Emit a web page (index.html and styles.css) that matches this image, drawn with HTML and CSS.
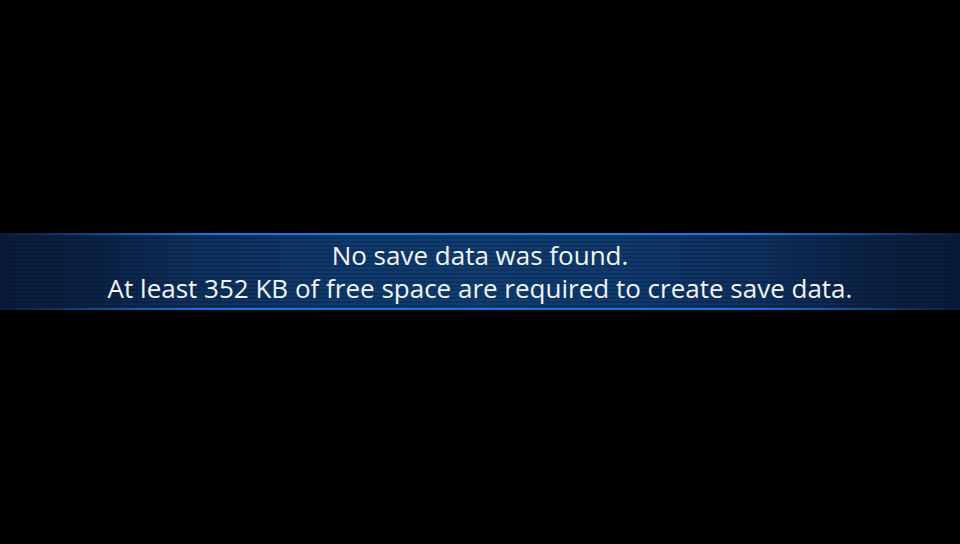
FILE: index.html
```html
<!DOCTYPE html>
<html>
<head>
<meta charset="utf-8">
<link rel="stylesheet" href="styles.css">
</head>
<body>
<div class="screen">
  <div class="banner">
    <p class="msg">No save data was found.</p>
    <p class="msg">At least 352 KB of free space are required to create save data.</p>
  </div>
</div>
</body>
</html>
```
FILE: styles.css
```css
html, body {
  margin: 0;
  padding: 0;
  background: #000;
}
.screen {
  width: 960px;
  height: 544px;
  display: flex;
  flex-direction: column;
  padding-top: 233px;
  box-sizing: border-box;
}
.banner {
  height: 77px;
  box-sizing: border-box;
  border-top: 2px solid transparent;
  border-bottom: 2px solid transparent;
  border-image: linear-gradient(90deg, rgba(30,114,216,0) 0%, rgba(30,114,216,0.35) 8%, #1e74dc 22%, #2079e2 50%, #1e74dc 78%, rgba(30,114,216,0.35) 92%, rgba(30,114,216,0) 100%) 1;
  background:
    linear-gradient(90deg, rgba(8,26,54,0.75) 0%, rgba(8,26,54,0) 20%, rgba(8,26,54,0) 80%, rgba(8,26,54,0.75) 100%),
    repeating-linear-gradient(180deg, rgba(120,170,255,0.045) 0px, rgba(120,170,255,0.045) 2px, rgba(0,0,0,0.08) 2px, rgba(0,0,0,0.08) 4px),
    linear-gradient(90deg, #081a36 0%, #0a2750 15%, #0c3466 35%, #0d3769 50%, #0c3466 65%, #0a2750 85%, #081a36 100%);
  display: flex;
  flex-direction: column;
  align-items: center;
  justify-content: center;
}
.msg {
  margin: 0;
  color: #f2f4f7;
  font-family: "Open Sans", "Noto Sans", sans-serif;
  font-size: 26px;
  line-height: 33px;
  white-space: nowrap;
}
```
